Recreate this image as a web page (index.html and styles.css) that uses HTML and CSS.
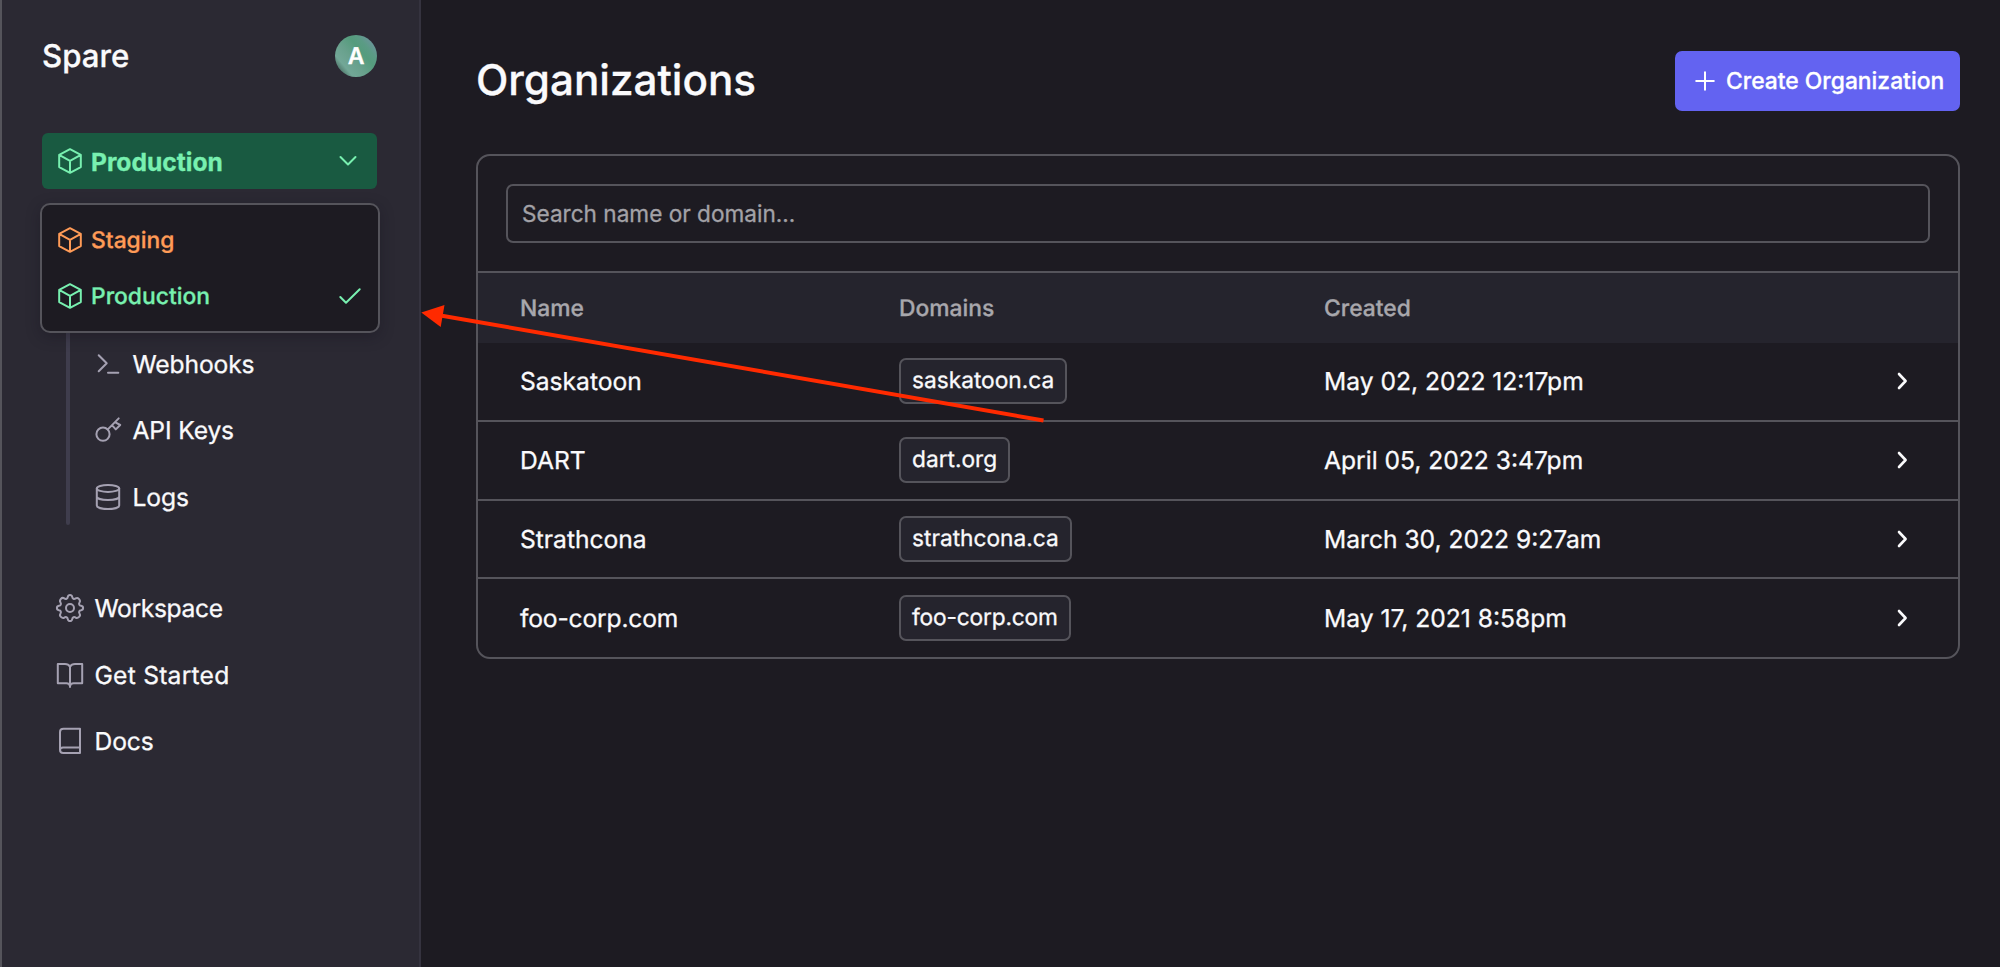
FILE: index.html
```html
<!DOCTYPE html>
<html lang="en">
<head>
<meta charset="utf-8">
<title>Organizations</title>
<link rel="stylesheet" href="styles.css">
</head>
<body>
<svg class="defs" width="0" height="0">
  <symbol id="cube" viewBox="0 0 24 26"><path d="M12 1.2 22.8 6.9V19.1L12 24.8 1.2 19.1V6.9ZM1.6 7.2 12 12.8 22.4 7.2M12 12.8V24.6"/></symbol>
  <symbol id="chev" viewBox="0 0 12 18"><path d="M2 2 8.6 9 2 16"/></symbol>
</svg>
<div class="app">
  <aside class="sidebar">
    <header class="brand"><span class="brand-name">Spare</span><span class="avatar">A</span></header>
    <div class="env">
      <button class="env-button">
        <svg class="cube"><use href="#cube"/></svg><span>Production</span>
        <svg class="env-chev" viewBox="0 0 18 12"><path d="M1.5 2 9 9.5 16.5 2"/></svg>
      </button>
      <div class="env-menu">
        <div class="env-item staging"><svg class="cube"><use href="#cube"/></svg><span>Staging</span></div>
        <div class="env-item"><svg class="cube"><use href="#cube"/></svg><span>Production</span>
          <svg class="check" viewBox="0 0 22 17"><path d="M1.3 9 7 14.8 20.7 1.3"/></svg></div>
      </div>
    </div>
    <nav class="subnav">
      <a><svg class="icon" viewBox="0 0 28 28"><path d="M4.7 5.3 12.7 13.3 4.7 21.3M14 22.7H24.3"/></svg>Webhooks</a>
      <a><svg class="icon" viewBox="0 0 28 28"><circle cx="9" cy="18.2" r="6.6"/><path d="M13.8 13.4 24.7 2.4M21 6.2 26.2 9 21.8 13.4 18.2 9.4"/></svg>API Keys</a>
      <a><svg class="icon" viewBox="0 0 28 28"><ellipse cx="14" cy="5.4" rx="11.2" ry="3.5"/><path d="M2.8 5.4V22.6C2.8 24.6 7.8 26 14 26S25.2 24.6 25.2 22.6V5.4M2.8 13.5C2.8 15.5 7.8 17 14 17S25.2 15.5 25.2 13.5"/></svg>Logs</a>
    </nav>
    <nav class="mainnav">
      <a><svg class="icon" viewBox="0 0 28 28"><circle cx="14" cy="14" r="4"/><path d="M14 .9C15.5 .9 16 1.8 16.2 2.9C16.5 4.8 18.1 5.5 19.7 4.4C20.7 3.7 21.7 3.6 22.9 4.9S24.3 7.3 23.6 8.3C22.5 9.9 23.2 11.5 25.1 11.8C26.2 12 27.1 12.5 27.1 14S26.2 16 25.1 16.2C23.2 16.5 22.5 18.1 23.6 19.7C24.3 20.7 24.3 21.7 23.1 22.9S20.7 24.3 19.7 23.6C18.1 22.5 16.5 23.2 16.2 25.1C16 26.2 15.5 27.1 14 27.1S12 26.2 11.8 25.1C11.5 23.2 9.9 22.5 8.3 23.6C7.3 24.3 6.3 24.3 4.9 22.9S3.7 20.7 4.4 19.7C5.5 18.1 4.8 16.5 2.9 16.2C1.8 16 .9 15.5 .9 14S1.8 12 2.9 11.8C4.8 11.5 5.5 9.9 4.4 8.3C3.7 7.3 3.7 6.3 4.9 4.9S7.3 3.7 8.3 4.4C9.9 5.5 11.5 4.8 11.8 2.9C12 1.8 12.5 .9 14 .9Z"/></svg><span class="tight">Workspace</span></a>
      <a><svg class="icon" viewBox="0 0 28 28"><path d="M14 26V5.8C13 4 11.5 3 9 3H1.8V22.3H10.5C12.5 22.3 13.6 23 14 25C14.4 23 15.5 22.3 17.5 22.3H26.2V3H19C16.5 3 15 4 14 5.8"/></svg><span class="loose">Get Started</span></a>
      <a><svg class="icon" viewBox="0 0 28 28"><path d="M24 20.5V1.8H7.5C5.3 1.8 4 3.2 4 5V22.7C4 24.6 5.2 26 7.2 26H24V20.5H7C5.2 20.5 4 21.5 4 23"/></svg>Docs</a>
    </nav>
  </aside>
  <main class="main">
    <header class="page-head">
      <h1>Organizations</h1>
      <button class="create"><svg class="plus" viewBox="0 0 20 20"><path d="M10 1.2V18.8M1.2 10H18.8"/></svg>Create Organization</button>
    </header>
    <section class="card">
      <div class="search-wrap"><input class="search" type="text" placeholder="Search name or domain..."></div>
      <div class="row head"><span>Name</span><span>Domains</span><span>Created</span></div>
      <div class="row"><span>Saskatoon</span><span class="chip">saskatoon.ca</span><span>May 02, 2022 12:17pm</span><svg class="chev"><use href="#chev"/></svg></div>
      <div class="row"><span>DART</span><span class="chip">dart.org</span><span>April 05, 2022 3:47pm</span><svg class="chev"><use href="#chev"/></svg></div>
      <div class="row"><span>Strathcona</span><span class="chip">strathcona.ca</span><span>March 30, 2022 9:27am</span><svg class="chev"><use href="#chev"/></svg></div>
      <div class="row hyphenated"><span>foo-corp.com</span><span class="chip">foo-corp.com</span><span>May 17, 2021 8:58pm</span><svg class="chev"><use href="#chev"/></svg></div>
    </section>
  </main>
  <svg class="arrow" viewBox="0 0 630 120"><path class="shaft" d="M18 7.2 622.5 112.5"/><path class="tip" d="M.3 4.4 23.5-3 19.7 19Z"/></svg>
</div>
</body>
</html>
```
FILE: styles.css
```css
* { box-sizing: border-box; }
body {
  margin: 0;
  background: #1d1b22;
  color: #fafafc;
  font: 400 24.6px/30px Inter, "Liberation Sans", sans-serif;
  text-rendering: geometricPrecision;
  -webkit-text-stroke: .3px currentColor;
}
button, input { font: inherit; color: inherit; border: 0; margin: 0; }
svg { flex: none; fill: none; stroke: currentColor; stroke-width: 2; stroke-linecap: round; stroke-linejoin: round; overflow: visible; }
.defs { position: absolute; }
.app { position: relative; display: flex; height: 967px; overflow: hidden; }

.sidebar {
  width: 421px;
  padding: 35px 43px 0 40px;
  background: #2b2933;
  border-left: 2px solid #55545b;
  border-right: 2px solid #35333f;
}
.brand { display: flex; align-items: center; justify-content: space-between; width: 335px; height: 42px; }
.brand-name { font-size: 31.2px; font-weight: 500; }
.avatar {
  width: 42px; height: 42px; border-radius: 50%;
  display: flex; align-items: center; justify-content: center;
  font-size: 23px; font-weight: 600; color: #fff;
  background: linear-gradient(50deg, #46695f 10%, #72a797 24%, #69a18d 42%, #559c7d 62%, #5b9b85 74%, #7192a3 92%);
}
.env { position: relative; z-index: 1; margin-top: 56px; }
.env-button {
  display: flex; align-items: center; width: 335px; height: 56px;
  padding: 0 20px 0 16px; border-radius: 6px;
  background: #195a41; color: #78f0b0; font-weight: 700;
}
.env-button span { padding-top: 1px; }
.cube { width: 24px; height: 26px; margin-right: 9px; }
.env-chev { width: 18px; height: 12px; margin-left: auto; }
.env-menu {
  position: absolute; left: -2px; top: 70px; width: 340px; height: 130px;
  padding: 7px 17px 0 16px;
  border: 2px solid #55545b; border-radius: 10px;
  background: #1d1b22; box-shadow: 0 4px 14px rgba(20, 18, 28, .35);
}
.env-item { display: flex; align-items: center; height: 56px; font-size: 22.85px; font-weight: 500; color: #78f0b0; }
.env-item.staging { color: #ff9b57; }
.check { width: 22px; height: 17px; margin-left: auto; }
.sidebar nav { display: flex; flex-direction: column; }
.sidebar a { display: flex; align-items: center; height: 66.5px; letter-spacing: -.12px; }
.tight { letter-spacing: -.36px; }
.loose { letter-spacing: .25px; }
.icon { width: 28px; height: 28px; color: #a5a1b2; margin-right: 10.5px; }
.subnav { position: relative; margin-top: 141.5px; padding-left: 52px; }
.subnav::before {
  content: ""; position: absolute; left: 24px; top: -60px; bottom: 5px; width: 4px;
  border-radius: 2px; background: #3f3d4d;
}
.mainnav { margin-top: 45px; padding-left: 14px; }

.main { flex: 1; padding: 51px 40px 0 55px; }
.page-head { display: flex; align-items: center; justify-content: space-between; height: 60px; }
h1 { margin: 0; font-size: 42.2px; font-weight: 500; line-height: 50px; }
.create {
  display: flex; align-items: center; gap: 11px; height: 59.5px; width: 285px; padding: 0 0 0 20px;
  border-radius: 7px; background: #6363f1; color: #fff;
  font-size: 22.85px; font-weight: 500; white-space: nowrap;
}
.plus { width: 20px; height: 20px; }
.card { margin-top: 43px; border: 2px solid #55545b; border-radius: 14px; height: 504.5px; overflow: hidden; }
.search-wrap { height: 117px; padding: 28px 28px 0; border-bottom: 2px solid #55545b; }
.search {
  display: block; width: 100%; height: 59px; padding: 0 14px; outline: 0;
  border: 2px solid #55545b; border-radius: 7px; background: transparent;
  font-size: 22.6px;
}
.search::placeholder { color: #a3a2a7; opacity: 1; }
.row {
  display: grid; grid-template-columns: 379px 425px 1fr 12px;
  align-items: center; height: 78.75px; padding: 0 49px 0 42px;
  border-bottom: 2px solid #55545b;
}
.row:last-child { border-bottom: 0; padding-bottom: 2px; }
.row.head { height: 70px; padding-bottom: 1px; background: #25242d; border: 0; color: #a8a7ac; font-size: 22.85px; font-weight: 500; }
.chip {
  justify-self: start; height: 46px; line-height: 42px; padding: 0 11px;
  border: 2px solid #55545b; border-radius: 7px; background: #25242d; font-size: 22.7px;
}
.hyphenated span:nth-child(-n+2) { letter-spacing: -.16px; }
.chev { width: 12px; height: 18px; stroke-width: 2.6; }
.arrow { position: absolute; left: 421px; top: 308px; width: 630px; height: 120px; }
.shaft { stroke: #ff2a00; stroke-width: 4; stroke-linecap: butt; }
.tip { fill: #ff2a00; stroke: none; }
```
